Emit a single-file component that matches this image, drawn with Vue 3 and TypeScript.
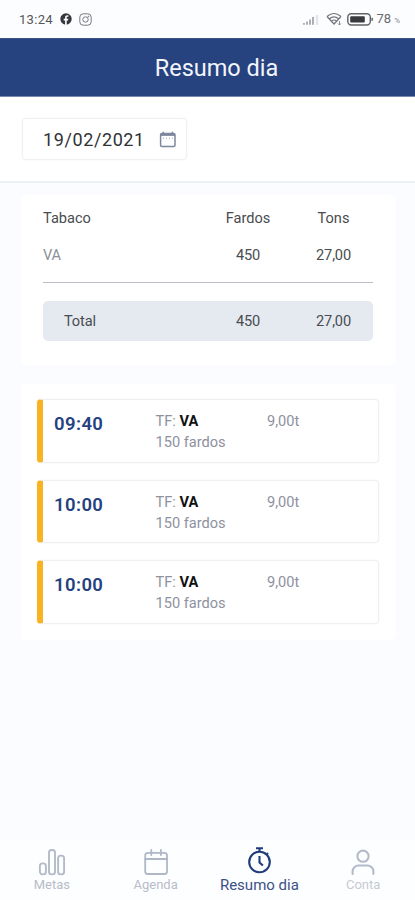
<script setup lang="ts">
interface Delivery {
  time: string
  type: string
  bales: string
  weight: string
}

const deliveries: Delivery[] = [
  { time: '09:40', type: 'VA', bales: '150 fardos', weight: '9,00t' },
  { time: '10:00', type: 'VA', bales: '150 fardos', weight: '9,00t' },
  { time: '10:00', type: 'VA', bales: '150 fardos', weight: '9,00t' },
]
</script>

<template>
  <div class="app">
    <div class="status">
      <span class="clock">13:24</span>
      <svg class="fb" width="12" height="12" viewBox="0 0 12 12">
        <circle cx="6" cy="6" r="5.7" fill="#35373b" />
        <path d="M5.1 12V7.5H3.7V5.8h1.4V4.6c0-1.6.9-2.4 2.3-2.4h1v1.5h-.8c-.7 0-.9.4-.9.9v1.2h1.6l-.3 1.7H6.7V12z" fill="#fff" />
      </svg>
      <svg class="ig" width="13" height="13" viewBox="0 0 13 13" fill="none" stroke="#777a7e">
        <rect x=".8" y=".8" width="11.4" height="11.4" rx="3.4" />
        <circle cx="6.5" cy="6.5" r="2.7" />
        <circle cx="9.5" cy="3.5" r=".4" />
      </svg>
      <div class="system">
        <svg width="16" height="12" viewBox="0 0 16 12">
          <path d="M1 10v1.8M4 8.5v3.3M7 6.5v5.3M10 4v7.8" stroke="#8b8d92" stroke-width="1.4" />
          <path d="M14 2v9.8" stroke="#e3e5e8" stroke-width="2.4" />
        </svg>
        <svg class="wifi" width="17" height="14" viewBox="0 0 17 14" fill="none" stroke="#727479" stroke-width="1.2">
          <path d="M1 4.5Q8 -1.5 15 4.5M3.5 6.8Q8 3 12.5 6.8M5.6 9Q8 7 10.4 9M1 4.5L8 12l7-7.5" />
          <path d="M13.5 9v4M12 11.5l1.5 1.5 1.5-1.5" stroke-width=".8" />
        </svg>
        <svg class="battery" width="27" height="13" viewBox="0 0 27 13">
          <rect x=".8" y=".8" width="22.5" height="11.2" rx="3.5" fill="none" stroke="#616266" stroke-width="1.4" />
          <rect x="3.2" y="3.2" width="14.6" height="6.4" rx="1" fill="#393a3d" />
          <path d="M25.2 4.8v3" stroke="#77797d" stroke-width="1.8" />
        </svg>
        <span class="percent">78</span><span class="sign">%</span>
      </div>
    </div>

    <header class="header">Resumo dia</header>

    <section class="filter">
      <div class="date">
        <span>19/02/2021</span>
        <svg width="18" height="17" viewBox="0 0 18 17" fill="none" stroke="#7d879e">
          <rect x="1.6" y="2.4" width="14.4" height="13.2" rx="1.4" stroke-width="1.5" />
          <path d="M1.6 3.7H16" stroke-width="2.4" />
          <path d="M4.3.7v2.5M13.4.7v2.5" stroke-width="1.5" />
          <path d="M4.4 6.5v1.6M7.4 6.5v1.6M10.4 6.5v1.6M13.4 6.5v1.6" stroke="#b6bdca" />
        </svg>
      </div>
    </section>

    <section class="summary">
      <div class="row"><span>Tabaco</span><span>Fardos</span><span>Tons</span></div>
      <div class="row values"><span class="muted">VA</span><span>450</span><span>27,00</span></div>
      <div class="row total"><span>Total</span><span>450</span><span>27,00</span></div>
    </section>

    <section class="deliveries">
      <article v-for="(d, i) in deliveries" :key="i" class="delivery">
        <div class="time">{{ d.time }}</div>
        <div class="detail">
          <div>TF: <b>{{ d.type }}</b></div>
          <div>{{ d.bales }}</div>
        </div>
        <div class="weight">{{ d.weight }}</div>
      </article>
    </section>

    <nav class="nav">
      <div class="tab">
        <svg width="28" height="28" viewBox="0 0 28 28" fill="none" stroke="#b3bbca" stroke-width="1.9">
          <rect x="1.9" y="15.4" width="6" height="11" rx="2.6" />
          <rect x="11" y="2" width="6" height="24.4" rx="2.6" />
          <rect x="20.1" y="7.6" width="6" height="18.8" rx="2.6" />
        </svg>
        <span>Metas</span>
      </div>
      <div class="tab">
        <svg width="28" height="28" viewBox="0 0 28 28" fill="none" stroke="#b0b8c7" stroke-width="1.8" stroke-linecap="round">
          <rect x="3.2" y="4.8" width="21.8" height="21.2" rx="2.6" />
          <path d="M3.2 11H25M9.3 2v5M18.9 2v5" />
        </svg>
        <span>Agenda</span>
      </div>
      <div class="tab active">
        <svg width="28" height="28" viewBox="0 0 28 28" fill="none" stroke="#203c7d" stroke-width="2.1">
          <circle cx="14.5" cy="16" r="10.3" />
          <path d="M11 2.2h7M14.5 2v4M14.5 10v6.5l3.4 3M21.8 8.2l1.2-1.2" />
        </svg>
        <span>Resumo dia</span>
      </div>
      <div class="tab">
        <svg width="28" height="28" viewBox="0 0 28 28" fill="none" stroke="#b3bbca" stroke-width="2.1" stroke-linecap="round">
          <circle cx="14" cy="8.2" r="5.6" />
          <path d="M3.6 26v-2.5a6 6 0 0 1 6-6h8.8a6 6 0 0 1 6 6V26" />
        </svg>
        <span class="faint">Conta</span>
      </div>
    </nav>
  </div>
</template>

<style>
body {
  margin: 0;
}
</style>

<style scoped>
.app {
  box-sizing: border-box;
  width: 415px;
  height: 900px;
  display: flex;
  flex-direction: column;
  overflow: hidden;
  background: #fafcff;
  color: #4a4c50;
  font-family: Roboto, sans-serif;
}
.app * {
  box-sizing: border-box;
}
.app svg {
  display: block;
  flex: none;
}
.status {
  height: 38px;
  flex: none;
  display: flex;
  align-items: center;
  padding: 0 15px 0 19px;
  background: #fcfdff;
}
.clock {
  width: 35px;
  font-size: 13px;
  letter-spacing: 0.3px;
  color: #55575b;
}
.fb {
  margin-left: 6px;
}
.ig {
  margin-left: 7px;
}
.system {
  display: flex;
  align-items: center;
  margin-left: auto;
}
.wifi {
  margin-left: 7px;
}
.battery {
  margin-left: 4px;
}
.percent {
  margin-left: 3px;
  font-size: 13px;
  line-height: 16px;
  color: #696b70;
}
.sign {
  margin: 3px 0 0 3px;
  font-size: 8px;
  color: #85878b;
}
.header {
  height: 59px;
  flex: none;
  padding: 1px 0 0 18px;
  border-top: 1px solid #3b5487;
  border-bottom: 1px solid #7688b0;
  background: #26437f;
  color: #f2f5fb;
  font-size: 23.5px;
  line-height: 57px;
  text-align: center;
}
.filter {
  height: 86px;
  flex: none;
  padding: 21px 22px;
  border-bottom: 2px solid #eceff3;
  background: #fff;
}
.date {
  width: 165px;
  height: 42px;
  display: flex;
  align-items: center;
  justify-content: space-between;
  padding: 0 9px 0 20px;
  border: 1px solid #eff0f2;
  border-radius: 4px;
  box-shadow: 0 0 2px #f1f2f4;
  color: #303235;
  font-size: 18px;
  letter-spacing: 0.6px;
}
.summary {
  width: 375px;
  height: 170px;
  flex: none;
  margin: 12px 0 0 21px;
  padding: 12px 23px 0 22px;
  border-radius: 5px;
  background: #fff;
  font-size: 14.6px;
}
.row {
  display: grid;
  grid-template-columns: 161px 88px 83px;
  line-height: 22px;
}
.row span:nth-child(n + 2) {
  text-align: center;
}
.values {
  height: 54px;
  padding-top: 15px;
  border-bottom: 1px solid #b9bec9;
}
.values,
.total {
  letter-spacing: -0.15px;
}
.muted {
  color: #8c9098;
}
.total {
  grid-template-columns: 140px 88px 83px;
  height: 40px;
  margin-top: 18px;
  padding-left: 21px;
  border-radius: 5px;
  background: #e5e9f0;
  line-height: 41px;
}
.deliveries {
  width: 375px;
  height: 256px;
  flex: none;
  display: flex;
  flex-direction: column;
  gap: 17px;
  margin: 19px 0 0 21px;
  padding: 15px 17px 0 16px;
  border-radius: 5px;
  background: #fff;
}
.delivery {
  height: 63.5px;
  flex: none;
  display: grid;
  grid-template-columns: 101.5px 111.5px 1fr;
  padding: 11px 0 0 11px;
  border: 1px solid #eeeff2;
  border-left: 6px solid #f8b222;
  border-radius: 4px;
  box-shadow: 0 0 2px #f2f3f5;
  color: #8e919e;
  font-size: 14.6px;
  line-height: 21px;
}
.time {
  padding-top: 2px;
  color: #25417f;
  font-size: 18.5px;
  font-weight: 600;
  line-height: 23px;
  letter-spacing: 0.4px;
}
.delivery b {
  color: #111;
}
.nav {
  height: 60px;
  flex: none;
  display: grid;
  grid-template-columns: repeat(4, 1fr);
  margin-top: auto;
  background: #fdfeff;
}
.tab {
  display: flex;
  flex-direction: column;
  align-items: center;
  padding-top: 8px;
  color: #b7bcc9;
  font-size: 13px;
  line-height: 18px;
}
.faint {
  color: #c6cad3;
}
.active {
  padding-top: 6px;
  color: #3c5186;
  font-size: 15px;
  line-height: 22px;
}
</style>
